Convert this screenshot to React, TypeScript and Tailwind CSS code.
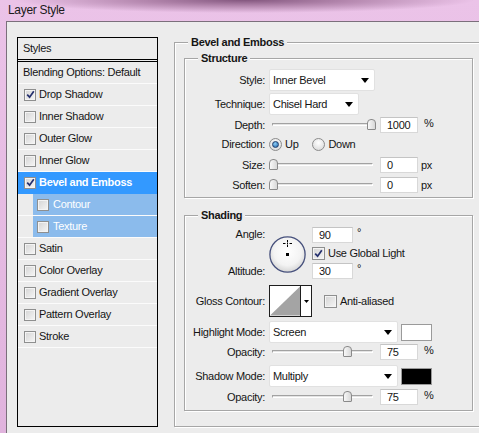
import type { ReactNode } from "react";

const styleRows = [
  { name: "Drop Shadow", checked: true },
  { name: "Inner Shadow" },
  { name: "Outer Glow" },
  { name: "Inner Glow" },
  { name: "Bevel and Emboss", checked: true, active: true },
  { name: "Contour", sub: true },
  { name: "Texture", sub: true },
  { name: "Satin" },
  { name: "Color Overlay" },
  { name: "Gradient Overlay" },
  { name: "Pattern Overlay" },
  { name: "Stroke" },
];

function CheckBox({ checked, size = "h-[12px] w-[12px]" }: { checked?: boolean; size?: string }) {
  return (
    <span className={`flex ${size} shrink-0 items-center justify-center border border-[#8e8f8f] bg-[linear-gradient(135deg,#d4d4d4,#f6f6f6)] shadow-[inset_0_0_0_1px_#f4f4f4]`}>
      {checked && (
        <svg width="9" height="9" viewBox="0 0 9 9">
          <path d="M1.2 4.6 L3.6 7.2 L7.8 1.2" fill="none" stroke="#25306e" strokeWidth="1.7" />
        </svg>
      )}
    </span>
  );
}

function Radio({ on }: { on?: boolean }) {
  return (
    <span className="flex h-[13px] w-[13px] shrink-0 items-center justify-center rounded-full border border-[#8b8b8b] bg-[radial-gradient(circle_at_50%_35%,#ffffff,#d4d4d4)]">
      {on && <span className="h-[7px] w-[7px] rounded-full border border-[#1f3d6b] bg-[radial-gradient(circle_at_40%_35%,#8fd0f8,#1b5fa6)]" />}
    </span>
  );
}

function Arrow() {
  return (
    <svg width="8" height="5" viewBox="0 0 8 5">
      <polygon points="0,0 8,0 4,5" fill="#000" />
    </svg>
  );
}

function Select({ value, w }: { value: string; w: string }) {
  return (
    <div className={`flex h-[22px] ${w} items-center justify-between rounded-[2px] border border-[#e1e1e1] bg-white pl-[3px] pr-[5px]`}>
      <span>{value}</span>
      <Arrow />
    </div>
  );
}

function Field({ value, w = "w-[38px]" }: { value: string; w?: string }) {
  return (
    <div className={`flex h-[16px] ${w} items-center border border-[#d8d8d8] border-t-[#c4c4c4] bg-white pl-[6px]`}>
      {value}
    </div>
  );
}

function Slider({ thumb }: { thumb: string }) {
  return (
    <div className="relative h-[12px] w-[107px]">
      <div className="absolute left-[3px] right-[3px] top-[4px] h-[3px] border border-[#a2a2a2] border-b-white border-r-white bg-[#e4e4e4]" />
      <div className={`absolute top-0 ${thumb} h-[11px] w-[9px] rounded-t-[4px] rounded-b-[1px] border border-[#8a8a8a] bg-[linear-gradient(90deg,#f8f8f8,#d8d8d8)]`} />
    </div>
  );
}

function Row({ label, h, className = "", children }: { label: string; h: string; className?: string; children: ReactNode }) {
  return (
    <div className={`flex ${h} items-center ${className}`}>
      <div className="w-[80px] text-right">{label}</div>
      <div className="ml-[4px] flex items-center">{children}</div>
    </div>
  );
}

function Group({ title, className = "", children }: { title: string; className?: string; children: ReactNode }) {
  return (
    <div className={`relative border border-[#a6a6a6] shadow-[inset_1px_1px_0_#fff,1px_1px_0_#fff] ${className}`}>
      <span className="absolute left-[13px] top-[-8px] bg-[#ececec] px-[3px] font-bold leading-[14px]">{title}</span>
      {children}
    </div>
  );
}

function Dial() {
  return (
    <svg width="37" height="37" viewBox="0 0 37 37">
      <defs>
        <radialGradient id="dial" cx="50%" cy="42%" r="60%">
          <stop offset="0" stopColor="#ffffff" />
          <stop offset="0.65" stopColor="#f3f3f3" />
          <stop offset="1" stopColor="#d2d2d2" />
        </radialGradient>
      </defs>
      <circle cx="18.5" cy="18.5" r="17.6" fill="url(#dial)" stroke="#46507c" strokeWidth="1.3" />
      <path d="M18.5 4v2.5M18.5 8.5V11M14 7.5h2.5M20.5 7.5H23" stroke="#000" strokeWidth="1" />
      <rect x="18" y="7" width="1" height="1" fill="#000" />
      <rect x="17" y="17" width="3" height="3" fill="#000" />
    </svg>
  );
}

export default function App() {
  return (
    <div className="flex h-[433px] w-[479px] flex-col overflow-hidden bg-[linear-gradient(#ebc3e8,#e0b3dd)] font-['Liberation_Sans',Arial,sans-serif] text-[11px] leading-[13px] tracking-[-0.3px] text-[#151515]">
      {/* title bar */}
      <div className="flex h-[21px] shrink-0 items-center bg-[radial-gradient(ellipse_230px_13px_at_245px_0px,#83567e_0%,#b487ae_45%,transparent_100%)] pl-[8px] text-[12px] text-[#1a1a1a]">
        Layer Style
      </div>

      {/* dialog body */}
      <div className="ml-[6px] flex flex-1 border-l border-t border-[#7b6f7b] bg-[#ececec]">
        {/* styles list */}
        <div className="ml-[10px] mt-[15px] flex h-[390px] w-[141px] shrink-0 flex-col border border-black">
          <div className="flex h-[21px] items-center pl-[5px]">Styles</div>
          <div className="h-[3px] border-y border-black bg-[#ececec]" />
          <div className="flex h-[22px] items-center border-b border-[#fbfbfb] pl-[5px]">Blending Options: Default</div>
          {styleRows.map(row =>
            <div key={row.name} className={`flex h-[22px] border-b ${row.active ? "border-[#3399ff]" : "border-[#fbfbfb]"} ${row.sub ? "pl-[15px]" : ""}`}>
              <div className={`flex flex-1 items-center gap-[3px] ${row.sub ? "bg-[#8bbbec] pl-[4px] text-white" : row.active ? "bg-[#3399ff] pl-[6px] font-bold text-white" : "pl-[6px]"}`}>
                <CheckBox checked={row.checked} />
                <span className={row.sub ? "ml-[1px]" : ""}>{row.name}</span>
              </div>
            </div>
          )}
        </div>

        {/* bevel and emboss */}
        <Group title="Bevel and Emboss" className="ml-[16px] mt-[20px] h-[385px] w-[320px] shrink-0 pl-[9px] pt-[15px]">
          <Group title="Structure" className="w-[289px] pb-[2px] pt-[9px]">
            <Row label="Style:" h="h-[24px]"><Select value="Inner Bevel" w="w-[106px]" /></Row>
            <Row label="Technique:" h="h-[24px]"><Select value="Chisel Hard" w="w-[90px]" /></Row>
            <Row label="Depth:" h="h-[18px]">
              <Slider thumb="left-[98px]" />
              <div className="ml-[4px]"><Field value="1000" /></div>
              <span className="ml-[6px] -mt-[3px]">%</span>
            </Row>
            <Row label="Direction:" h="h-[21px]">
              <Radio on />
              <span className="ml-[3px]">Up</span>
              <span className="ml-[14px]"><Radio /></span>
              <span className="ml-[3px]">Down</span>
            </Row>
            <Row label="Size:" h="h-[20px]">
              <Slider thumb="left-0" />
              <div className="ml-[4px]"><Field value="0" /></div>
              <span className="ml-[3px]">px</span>
            </Row>
            <Row label="Soften:" h="h-[20px]">
              <Slider thumb="left-0" />
              <div className="ml-[4px]"><Field value="0" /></div>
              <span className="ml-[3px]">px</span>
            </Row>
          </Group>

          <Group title="Shading" className="mt-[17px] w-[289px] pb-[4px] pt-[10px]">
            <div className="flex h-[56px]">
              <div className="flex w-[80px] flex-col items-end">
                <div className="flex h-[16px] items-center">Angle:</div>
                <div className="mt-[21px] flex h-[16px] items-center">Altitude:</div>
              </div>
              <div className="ml-[4px] mt-[10px]"><Dial /></div>
              <div className="ml-[6px] flex flex-col">
                <div className="mt-[1px] flex">
                  <Field value="90" w="w-[41px]" />
                  <span className="ml-[4px] leading-[10px]">°</span>
                </div>
                <div className="flex h-[20px] items-center">
                  <CheckBox checked size="h-[13px] w-[13px]" />
                  <span className="ml-[3px]">Use Global Light</span>
                </div>
                <div className="flex">
                  <Field value="30" w="w-[41px]" />
                  <span className="ml-[4px] leading-[10px]">°</span>
                </div>
              </div>
            </div>
            <Row label="Gloss Contour:" h="h-[32px]" className="mt-[3px]">
              <div className="flex h-[32px] w-[43px] border border-[#1e1e1e] bg-white">
                <svg width="31" height="30" viewBox="0 0 31 30" className="border-r border-[#1e1e1e]">
                  <polygon points="0,30 31,0 31,30" fill="#a4a4a4" />
                </svg>
                <div className="flex flex-1 items-center justify-center">
                  <svg width="5" height="3" viewBox="0 0 5 3"><polygon points="0,0 5,0 2.5,3" fill="#000" /></svg>
                </div>
              </div>
              <span className="ml-[12px]"><CheckBox size="h-[13px] w-[13px]" /></span>
              <span className="ml-[3px]">Anti-aliased</span>
            </Row>
            <Row label="Highlight Mode:" h="h-[22px]" className="mt-[4px]">
              <Select value="Screen" w="w-[129px]" />
              <div className="ml-[3px] h-[17px] w-[31px] border border-[#9a9a9a] bg-white" />
            </Row>
            <Row label="Opacity:" h="h-[18px]">
              <Slider thumb="left-[74px]" />
              <div className="ml-[4px]"><Field value="75" /></div>
              <span className="ml-[6px] -mt-[3px]">%</span>
            </Row>
            <Row label="Shadow Mode:" h="h-[22px]" className="mt-[4px]">
              <Select value="Multiply" w="w-[129px]" />
              <div className="ml-[3px] h-[17px] w-[31px] border border-[#9a9a9a] bg-black" />
            </Row>
            <Row label="Opacity:" h="h-[18px]" className="mt-[1px]">
              <Slider thumb="left-[74px]" />
              <div className="ml-[4px]"><Field value="75" /></div>
              <span className="ml-[6px] -mt-[3px]">%</span>
            </Row>
          </Group>
        </Group>
      </div>
    </div>
  );
}
